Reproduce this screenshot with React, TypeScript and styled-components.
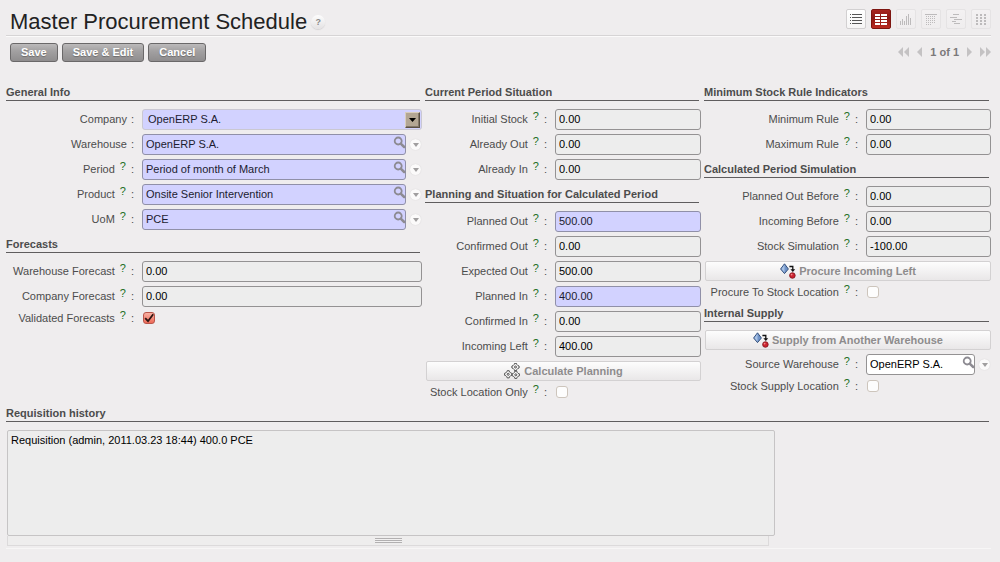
import React, { useId } from "react";
import styled, { createGlobalStyle, css } from "styled-components";

const GlobalStyle = createGlobalStyle`
  * { box-sizing: border-box; }
  body {
    margin: 0;
    background: #efedee;
    color: #4c4c4c;
    font-family: "Liberation Sans", Arial, Helvetica, sans-serif;
    font-size: 11px;
  }
  button, input, select, textarea { font: inherit; margin: 0; }
`;

const Page = styled.main`
  padding: 0 9px 0 6px;
`;

const Header = styled.header`
  display: flex;
  align-items: center;
  justify-content: space-between;
  height: 36px;
  padding: 3px 0 0 4px;
  border-bottom: 1px solid #d6d4d5;
  box-shadow: 0 1px 0 #fbfafa;
`;

const TitleGroup = styled.div`
  display: flex;
  align-items: center;
  gap: 4px;
  padding-top: 6px;
`;

const Title = styled.h1`
  margin: 0;
  font-size: 22px;
  font-weight: 400;
  line-height: 26px;
  color: #222;
`;

const TitleHelp = styled.button`
  display: grid;
  place-items: center;
  width: 14px;
  height: 14px;
  padding: 0;
  border: 0;
  border-radius: 50%;
  background: linear-gradient(#fdfdfd, #e4e2e3);
  box-shadow: 0 1px 1px #d4d2d3;
  color: #888;
  font-size: 9px;
  font-weight: 700;
  line-height: 14px;
`;

const Views = styled.nav`
  display: flex;
  gap: 5px;
  padding-bottom: 1px;
`;

const ViewButton = styled.button<{ $state: "on" | "active" | "off" }>`
  display: grid;
  place-items: center;
  width: 20px;
  height: 20px;
  padding: 0;
  border: 1px solid #e5e3e4;
  border-radius: 2px;
  background: linear-gradient(#f3f1f2, #efedee);
  color: #bdbbbc;
  ${(p) =>
    p.$state === "on" &&
    css`
      border-color: #d2d0d1;
      background: linear-gradient(#fff, #f6f5f5);
      color: #555;
    `}
  ${(p) =>
    p.$state === "active" &&
    css`
      border-color: #7d1510;
      background: linear-gradient(#a8251f, #8c1712 45%, #bb2b22);
      color: #fff;
    `}
`;

const Toolbar = styled.div`
  display: flex;
  align-items: center;
  justify-content: space-between;
  padding: 7px 0 18px 4px;
`;

const Actions = styled.div`
  display: flex;
  gap: 4px;
`;

const ActionButton = styled.button`
  height: 19px;
  padding: 0 10px;
  border: 1px solid #6a6869;
  border-radius: 3px;
  background: linear-gradient(#bcbabb, #a3a1a2 40%, #8f8d8e);
  color: #fff;
  font-weight: 700;
  line-height: 17px;
  text-shadow: 0 1px 1px #6d6b6c;
`;

const Pager = styled.div`
  display: flex;
  align-items: center;
  padding-bottom: 2px;
  color: #7b797a;
  font-weight: 700;
`;

const PageButton = styled.button`
  display: grid;
  place-items: center;
  height: 12px;
  padding: 0;
  margin-right: 8px;
  border: 0;
  background: none;
  color: #c4c2c3;
  &:last-child { margin-right: 0; }
`;

const PageCount = styled.span`
  margin-right: 8px;
`;

const Columns = styled.div`
  display: grid;
  grid-template-columns: minmax(0, 416fr) minmax(0, 276fr) minmax(0, 287fr);
  gap: 3px;
`;

const Column = styled.section<{ $label: number }>`
  --label: ${(p) => p.$label}px;
  display: flex;
  flex-direction: column;
`;

const Heading = styled.h2`
  margin: 0 2px 6px 0;
  padding-top: 5px;
  border-bottom: 1px solid #5f5d5e;
  font-size: 11px;
  font-weight: 700;
  line-height: 15px;
`;

const Row = styled.div<{ $short?: boolean }>`
  display: grid;
  grid-template-columns: var(--label) minmax(0, 1fr);
  align-items: center;
  height: ${(p) => (p.$short ? 18 : 25)}px;
`;

const Label = styled.label`
  display: flex;
  justify-content: flex-end;
  gap: 4px;
  padding: 0 8px 1px 0;
  line-height: 16px;
  white-space: nowrap;
`;

const Hint = styled.sup`
  align-self: flex-start;
  margin: -3px 1px 0 1px;
  color: #1d6f1d;
  font-size: 11px;
  line-height: 16px;
`;

const TextInput = styled.input<{ $tone: "plain" | "required" | "white" }>`
  display: block;
  width: 100%;
  height: 21px;
  padding: 0 3px 2px;
  border: 1px solid ${(p) => (p.$tone === "required" ? "#9090a8" : "#949293")};
  border-radius: 3px;
  background: ${(p) =>
    p.$tone === "required" ? "#d2d2ff" : p.$tone === "white" ? "#fff" : "#ededed"};
  color: ${(p) => (p.$tone === "required" ? "#1c1c30" : "#000")};
`;

const Lookup = styled.div`
  display: grid;
  grid-template-columns: minmax(0, 1fr) 16px;
`;

const LookupBox = styled.div`
  position: relative;
`;

const SearchButton = styled.button`
  position: absolute;
  top: 2px;
  right: 0;
  display: grid;
  place-items: center;
  width: 13px;
  height: 13px;
  padding: 0;
  border: 0;
  background: none;
  color: #8d8b92;
`;

const OpenButton = styled.button`
  align-self: center;
  justify-self: center;
  display: grid;
  place-items: center;
  width: 11px;
  height: 11px;
  margin-left: 3px;
  padding: 0;
  border: 0;
  border-radius: 50%;
  background: #fbfafa;
  box-shadow: 0 0 1px #c8c6c7;
  color: #a09e9f;
`;

const SelectBox = styled.div`
  position: relative;
`;

const Select = styled.select`
  display: block;
  width: 100%;
  height: 21px;
  padding: 0 20px 2px 5px;
  border: 1px solid #cac8d2;
  border-radius: 3px;
  appearance: none;
  background: #d2d2ff;
  color: #1c1c30;
`;

const SelectArrow = styled.span`
  position: absolute;
  top: 3px;
  right: 2px;
  display: grid;
  place-items: center;
  width: 15px;
  height: 16px;
  border: 1px solid;
  border-color: #d8cdbd #5a5045 #5a5045 #d8cdbd;
  box-shadow: inset -1px -1px 0 #83776a;
  background: #b3a694;
  pointer-events: none;
`;

const CheckBox = styled.span`
  position: relative;
  display: block;
  width: 12px;
  height: 12px;
  margin-left: 1px;
`;

const Check = styled.input`
  display: block;
  width: 12px;
  height: 12px;
  border: 1px solid #cdc5bc;
  border-radius: 3px;
  appearance: none;
  background: #fdfdfd;
  &:checked {
    border-color: #b9564b;
    background: linear-gradient(#f9b0a2, #ee6a58);
  }
`;

const Tick = styled.svg`
  position: absolute;
  inset: 0;
  pointer-events: none;
`;

const WideButton = styled.button`
  display: flex;
  align-items: center;
  justify-content: center;
  gap: 3px;
  height: 20px;
  margin: 2px 0 2px 1px;
  padding: 0;
  border: 1px solid #d3d1d2;
  border-radius: 2px;
  background: linear-gradient(#fdfdfd, #e9e7e8);
  color: #8e8c8d;
  font-weight: 700;
`;

const History = styled.section`
  padding-bottom: 14px;
`;

const HistoryBody = styled.div`
  width: 78%;
  margin: 8px 0 0 1px;
`;

const HistoryText = styled.textarea`
  display: block;
  width: 100%;
  height: 106px;
  padding: 2px 3px;
  border: 1px solid #c6c4c5;
  border-radius: 2px;
  background: #ededed;
  color: #000;
  line-height: 15px;
  resize: none;
`;

const Grip = styled.div`
  display: grid;
  place-items: center;
  width: calc(100% - 6px);
  height: 10px;
  border: 1px solid #dcdadb;
  border-top: 0;
  background: #eeeded;
`;

const GripLines = styled.span`
  width: 27px;
  height: 5px;
  background: repeating-linear-gradient(#b2b0b1 0 1px, #f2f1f1 1px 2px);
`;

const Footer = styled.div`
  height: 1px;
  margin-top: 2px;
  background: #f7f6f6;
`;

const Icon = ({ size = 14, children }: { size?: number; children: React.ReactNode }) => (
  <svg width={size} height={size} viewBox={`0 0 ${size} ${size}`} fill="currentColor" shapeRendering="crispEdges" aria-hidden>
    {children}
  </svg>
);

const ListIcon = () => (
  <Icon>
    {[2, 5, 8, 11].map((y) => (
      <React.Fragment key={y}>
        <rect x="1" y={y} width="1" height="1" />
        <rect x="3" y={y} width="10" height="1" />
      </React.Fragment>
    ))}
  </Icon>
);

const FormIcon = () => (
  <Icon>
    {[2, 5, 8, 11].map((y) => (
      <React.Fragment key={y}>
        <rect x="1" y={y} width="5" height="2" />
        <rect x="7" y={y} width="6" height="2" />
      </React.Fragment>
    ))}
  </Icon>
);

const ChartIcon = () => (
  <Icon>
    <rect x="1" y="9" width="1" height="4" />
    <rect x="3" y="7" width="1" height="6" />
    <rect x="5" y="9" width="1" height="4" />
    <rect x="7" y="4" width="1" height="9" />
    <rect x="9" y="2" width="1" height="11" />
    <rect x="11" y="6" width="1" height="7" />
  </Icon>
);

const CalendarIcon = () => (
  <Icon>
    <rect x="1" y="2" width="12" height="1" />
    {[4, 6, 8, 10, 12].map((y) =>
      [2, 4, 6, 8, 10].map((x) =>
        y === 12 && x > 6 ? null : <rect key={`${x}-${y}`} x={x} y={y} width="1" height="1" />
      )
    )}
  </Icon>
);

const GanttIcon = () => (
  <Icon>
    <rect x="4" y="2" width="6" height="1" />
    <rect x="1" y="5" width="7" height="1" />
    <rect x="5" y="7" width="8" height="1" />
    <rect x="3" y="9" width="4" height="1" />
    <rect x="5" y="11" width="6" height="1" />
  </Icon>
);

const GridIcon = () => (
  <Icon>
    {[2, 5, 8, 11].map((y) =>
      [2, 6, 10].map((x) => <rect key={`${x}-${y}`} x={x} y={y} width="2" height="2" />)
    )}
  </Icon>
);

const Arrow = ({ double, right }: { double?: boolean; right?: boolean }) => {
  const w = double ? 11 : 5;
  return (
    <svg width={w} height="10" viewBox={`0 0 ${w} 10`} fill="currentColor" aria-hidden>
      <g transform={right ? `translate(${w} 0) scale(-1 1)` : undefined}>
        <path d="M5 0v10L0 5z" />
        {double && <path d="M11 0v10L6 5z" />}
      </g>
    </svg>
  );
};

const SearchIcon = () => (
  <svg width="13" height="13" viewBox="0 0 13 13" fill="none" stroke="currentColor" aria-hidden>
    <circle cx="5.2" cy="5" r="3.5" strokeWidth="1.8" />
    <path d="M8 7.8L11.2 11" strokeWidth="2.5" strokeLinecap="round" />
  </svg>
);

const GearsIcon = () => (
  <svg width="17" height="16" viewBox="0 0 17 16" fill="#f7f6f6" stroke="#444" aria-hidden>
    {["translate(11.5 4)", "translate(4.2 11.3)", "translate(11.8 11.8)"].map((t) => (
      <g key={t} transform={t}>
        <path
          d="M-1-3.6H1L1.4-2.4 2.4-1.4 3.6-1V1L2.4 1.4 1.4 2.4 1 3.6H-1L-1.4 2.4-2.4 1.4-3.6 1V-1L-2.4-1.4-1.4-2.4z"
          strokeWidth=".9"
        />
        <circle r="1" strokeWidth=".9" />
      </g>
    ))}
  </svg>
);

const ProcureIcon = () => (
  <svg width="16" height="16" viewBox="0 0 16 16" aria-hidden>
    <path d="M4.5 .8L8.4 6 4.5 10.6 .6 6z" fill="#6f93c8" stroke="#27436f" strokeWidth=".9" />
    <path d="M4.5 1.6V9.8L1.5 6z" fill="#a9c3e6" />
    <path d="M9.4 3.5h3.4V7" fill="none" stroke="#111" strokeWidth="1.3" />
    <path d="M10.4 6.2h4.8L12.8 9z" fill="#111" />
    <circle cx="12.4" cy="12.5" r="2.8" fill="#cc2430" stroke="#7d1018" strokeWidth=".8" />
    <circle cx="11.6" cy="11.6" r=".9" fill="#f08a8a" />
  </svg>
);

const Down = ({ size, color }: { size: number; color: string }) => (
  <svg width={size} height="4" viewBox="0 0 8 5" preserveAspectRatio="none" aria-hidden>
    <path d="M0 0h8L4 5z" fill={color} />
  </svg>
);

type FieldProps = { label: string; hint?: boolean };

const FieldLabel = ({ id, label, hint }: FieldProps & { id: string }) => (
  <Label htmlFor={id}>
    <span>{label}</span>
    {hint && <Hint>?</Hint>}
    <span>:</span>
  </Label>
);

const TextField = ({ label, value, required }: FieldProps & { value: string; required?: boolean }) => {
  const id = useId();
  return (
    <Row>
      <FieldLabel id={id} label={label} hint />
      <TextInput id={id} defaultValue={value} $tone={required ? "required" : "plain"} />
    </Row>
  );
};

const LookupField = ({ label, value, hint, optional }: FieldProps & { value: string; optional?: boolean }) => {
  const id = useId();
  return (
    <Row>
      <FieldLabel id={id} label={label} hint={hint} />
      <Lookup>
        <LookupBox>
          <TextInput id={id} defaultValue={value} $tone={optional ? "white" : "required"} />
          <SearchButton type="button" aria-label={`Search ${label}`}>
            <SearchIcon />
          </SearchButton>
        </LookupBox>
        <OpenButton type="button" aria-label={`${label} actions`}>
          <Down size={6} color="currentColor" />
        </OpenButton>
      </Lookup>
    </Row>
  );
};

const CheckField = ({ label, checked }: FieldProps & { checked?: boolean }) => {
  const id = useId();
  return (
    <Row $short>
      <FieldLabel id={id} label={label} hint />
      <CheckBox>
        <Check id={id} type="checkbox" defaultChecked={checked} />
        {checked && (
          <Tick width="12" height="12" viewBox="0 0 12 12" fill="none" stroke="#2b1512" strokeWidth="1.8">
            <path d="M2.2 6.2L5 9.2 10.2 2.2" />
          </Tick>
        )}
      </CheckBox>
    </Row>
  );
};

export default function App() {
  return (
    <>
      <GlobalStyle />
      <Page>
        <Header>
          <TitleGroup>
            <Title>Master Procurement Schedule</Title>
            <TitleHelp type="button">?</TitleHelp>
          </TitleGroup>
          <Views aria-label="Views">
            <ViewButton $state="on" aria-label="List"><ListIcon /></ViewButton>
            <ViewButton $state="active" aria-label="Form"><FormIcon /></ViewButton>
            <ViewButton $state="off" aria-label="Graph"><ChartIcon /></ViewButton>
            <ViewButton $state="off" aria-label="Calendar"><CalendarIcon /></ViewButton>
            <ViewButton $state="off" aria-label="Gantt"><GanttIcon /></ViewButton>
            <ViewButton $state="off" aria-label="Grid"><GridIcon /></ViewButton>
          </Views>
        </Header>

        <Toolbar>
          <Actions>
            <ActionButton>Save</ActionButton>
            <ActionButton>Save &amp; Edit</ActionButton>
            <ActionButton>Cancel</ActionButton>
          </Actions>
          <Pager>
            <PageButton aria-label="First"><Arrow double /></PageButton>
            <PageButton aria-label="Previous"><Arrow /></PageButton>
            <PageCount>1 of 1</PageCount>
            <PageButton aria-label="Next"><Arrow right /></PageButton>
            <PageButton aria-label="Last"><Arrow double right /></PageButton>
          </Pager>
        </Toolbar>

        <Columns>
          <Column $label={136}>
            <Heading>General Info</Heading>
            <Row>
              <FieldLabel id="company" label="Company" />
              <SelectBox>
                <Select id="company">
                  <option>OpenERP S.A.</option>
                </Select>
                <SelectArrow><Down size={7} color="#000" /></SelectArrow>
              </SelectBox>
            </Row>
            <LookupField label="Warehouse" value="OpenERP S.A." />
            <LookupField label="Period" value="Period of month of March" hint />
            <LookupField label="Product" value="Onsite Senior Intervention" hint />
            <LookupField label="UoM" value="PCE" hint />
            <Heading>Forecasts</Heading>
            <TextField label="Warehouse Forecast" value="0.00" />
            <TextField label="Company Forecast" value="0.00" />
            <CheckField label="Validated Forecasts" checked />
          </Column>

          <Column $label={130}>
            <Heading>Current Period Situation</Heading>
            <TextField label="Initial Stock" value="0.00" />
            <TextField label="Already Out" value="0.00" />
            <TextField label="Already In" value="0.00" />
            <Heading>Planning and Situation for Calculated Period</Heading>
            <TextField label="Planned Out" value="500.00" required />
            <TextField label="Confirmed Out" value="0.00" />
            <TextField label="Expected Out" value="500.00" />
            <TextField label="Planned In" value="400.00" required />
            <TextField label="Confirmed In" value="0.00" />
            <TextField label="Incoming Left" value="400.00" />
            <WideButton type="button"><GearsIcon />Calculate Planning</WideButton>
            <CheckField label="Stock Location Only" />
          </Column>

          <Column $label={162}>
            <Heading>Minimum Stock Rule Indicators</Heading>
            <TextField label="Minimum Rule" value="0.00" />
            <TextField label="Maximum Rule" value="0.00" />
            <Heading>Calculated Period Simulation</Heading>
            <TextField label="Planned Out Before" value="0.00" />
            <TextField label="Incoming Before" value="0.00" />
            <TextField label="Stock Simulation" value="-100.00" />
            <WideButton type="button"><ProcureIcon />Procure Incoming Left</WideButton>
            <CheckField label="Procure To Stock Location" />
            <Heading>Internal Supply</Heading>
            <WideButton type="button"><ProcureIcon />Supply from Another Warehouse</WideButton>
            <LookupField label="Source Warehouse" value="OpenERP S.A." hint optional />
            <CheckField label="Stock Supply Location" />
          </Column>
        </Columns>

        <History>
          <Heading id="history">Requisition history</Heading>
          <HistoryBody>
            <HistoryText aria-labelledby="history" defaultValue="Requisition (admin, 2011.03.23 18:44) 400.0 PCE" />
            <Grip><GripLines /></Grip>
          </HistoryBody>
          <Footer />
        </History>
      </Page>
    </>
  );
}
